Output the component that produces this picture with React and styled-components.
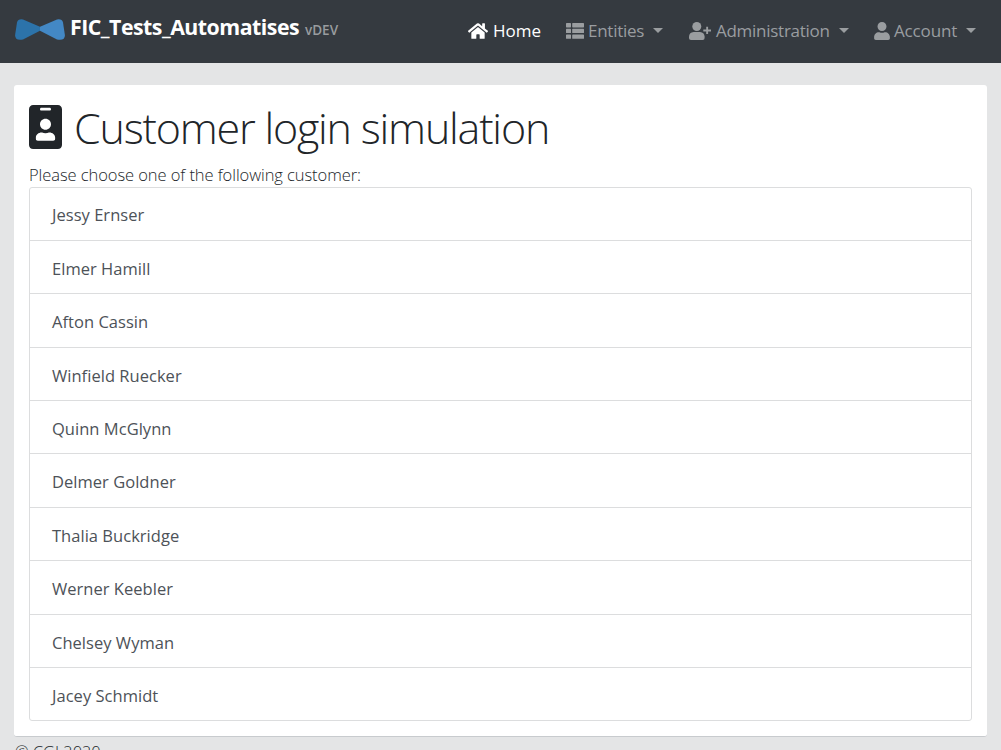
import React from 'react';
import styled, { createGlobalStyle } from 'styled-components';
import { FaHome, FaUser, FaIdBadge } from 'react-icons/fa';

const GlobalStyle = createGlobalStyle`
  * { box-sizing: border-box; }
  html, body { margin: 0; height: 750px; overflow: hidden; }
  body {
    background: #e4e5e6;
    color: #212529;
    font: 16px/25px "Open Sans", "Noto Sans", sans-serif;
  }
`;

const Navbar = styled.nav`
  display: flex;
  justify-content: space-between;
  height: 63px;
  padding: 0 19px 0 14px;
  background: #353a40;
  white-space: nowrap;
`;

const Brand = styled.div`
  display: flex;
  align-items: baseline;
  padding-top: 11px;
  color: #fff;
`;

const Logo = styled.svg`
  align-self: flex-start;
  margin: 8px 5px 0 1px;
`;

const BrandName = styled.span`
  width: 229px;
  margin-right: 6px;
  font-size: 21.3px;
  line-height: 32px;
  font-weight: 700;
  letter-spacing: -0.5px;
`;

const Version = styled.span`
  font-size: 13.5px;
  font-weight: 600;
  color: #999c9f;
`;

const Menu = styled.div`
  display: flex;
  padding-top: 18px;
`;

const MenuItem = styled.div`
  display: flex;
  align-items: center;
  height: 25px;
  width: ${(p) => p.$width}px;
  font-size: 17px;
  letter-spacing: ${(p) => p.$tracking || 0}px;
  color: ${(p) => (p.$active ? '#fff' : '#9a9da0')};
  svg { flex: none; margin-right: ${(p) => p.$gap || 4}px; }
`;

const Caret = styled.span`
  margin-left: 9px;
  border: 5px solid transparent;
  border-top-color: currentColor;
  border-bottom: 0;
`;

const Card = styled.main`
  height: 652px;
  margin: 22px 14px 0;
  padding: 12px 15px 0;
  background: #fff;
  border-radius: 3px;
  border-bottom: 1px solid #c8cbce;
`;

const Title = styled.h1`
  display: flex;
  align-items: center;
  height: 60px;
  margin: 0 0 3px;
  font-size: 43px;
  font-weight: 300;
  letter-spacing: -1.2px;
  white-space: nowrap;
  svg { flex: none; width: 33px; margin-right: 12px; }
`;

const Hint = styled.p`
  height: 27px;
  margin: 0;
  padding-top: 2px;
  font-size: 16.5px;
  font-weight: 300;
  letter-spacing: -0.07px;
`;

const List = styled.div`
  display: grid;
  grid-template-rows: 51.8px repeat(9, 53.4px);
  height: 534px;
  border: 1px solid #dcddde;
  border-radius: 3px;
`;

const Row = styled.div`
  padding: 14px 22px 0;
  font-size: 16.5px;
  letter-spacing: 0.03px;
  color: #4d5258;
  & + & { border-top: 1px solid #dcddde; padding-top: 15px; }
`;

const Footer = styled.footer`
  padding: 2px 15px;
  font-size: 16.4px;
  font-weight: 300;
`;

const ListIcon = () => (
  <svg width="18" height="16" viewBox="0 0 18 16" fill="currentColor">
    {[0, 5.7, 11.4].map((y) => (
      <g key={y}>
        <rect y={y} width="5" height="4.4" rx=".6" />
        <rect x="6.2" y={y} width="11.8" height="4.4" rx=".6" />
      </g>
    ))}
  </svg>
);

const UserPlusIcon = () => (
  <svg width="23" height="18" viewBox="0 0 23 18" fill="currentColor">
    <circle cx="7.8" cy="4.5" r="4.500" />
    <path d="M4.600 10h6.400Q15.300 10.400 15.600 14.500V16q0 2-2 2H2q-2 0-2-2v-1.500Q.3 10.400 4.600 10z" />
    <path d="M17.200 4.800h1.900v2.700H22v1.900h-2.900v2.700h-1.900V9.400h-2.900V7.500h2.900z" />
  </svg>
);

const customers = [
  'Jessy Ernser', 'Elmer Hamill', 'Afton Cassin', 'Winfield Ruecker', 'Quinn McGlynn',
  'Delmer Goldner', 'Thalia Buckridge', 'Werner Keebler', 'Chelsey Wyman', 'Jacey Schmidt',
];

export default function App() {
  return (
    <>
      <GlobalStyle />
      <Navbar>
        <Brand>
          <Logo width="50" height="22" viewBox="0 0 50 22">
            <path fill="#2c73aa" d="M8 .4 25 7.700v4L8 20.400Q0 22 .1 16L2 3.500Q3-.5 8 .4z" />
            <path fill="#4388c5" d="M42 .4 25 7.700v4L42 20.400Q50 22 49.900 16L48 3.500Q47-.5 42 .4z" />
          </Logo>
          <BrandName>FIC_Tests_Automatises</BrandName>
          <Version>vDEV</Version>
        </Brand>
        <Menu>
          <MenuItem $active $width={98} $gap={5}><FaHome size={20} />Home</MenuItem>
          <MenuItem $width={123} $tracking={-0.25}><ListIcon />Entities<Caret /></MenuItem>
          <MenuItem $width={184} $tracking={-0.27}><UserPlusIcon />Administration<Caret /></MenuItem>
          <MenuItem $width={109} $gap={3} $tracking={-0.15}><FaUser size={18} />Account<Caret /></MenuItem>
        </Menu>
      </Navbar>
      <Card>
        <Title><FaIdBadge size={44} />Customer login simulation</Title>
        <Hint>Please choose one of the following customer:</Hint>
        <List>{customers.map((name) => <Row key={name}>{name}</Row>)}</List>
      </Card>
      <Footer>© CGI 2020</Footer>
    </>
  );
}
